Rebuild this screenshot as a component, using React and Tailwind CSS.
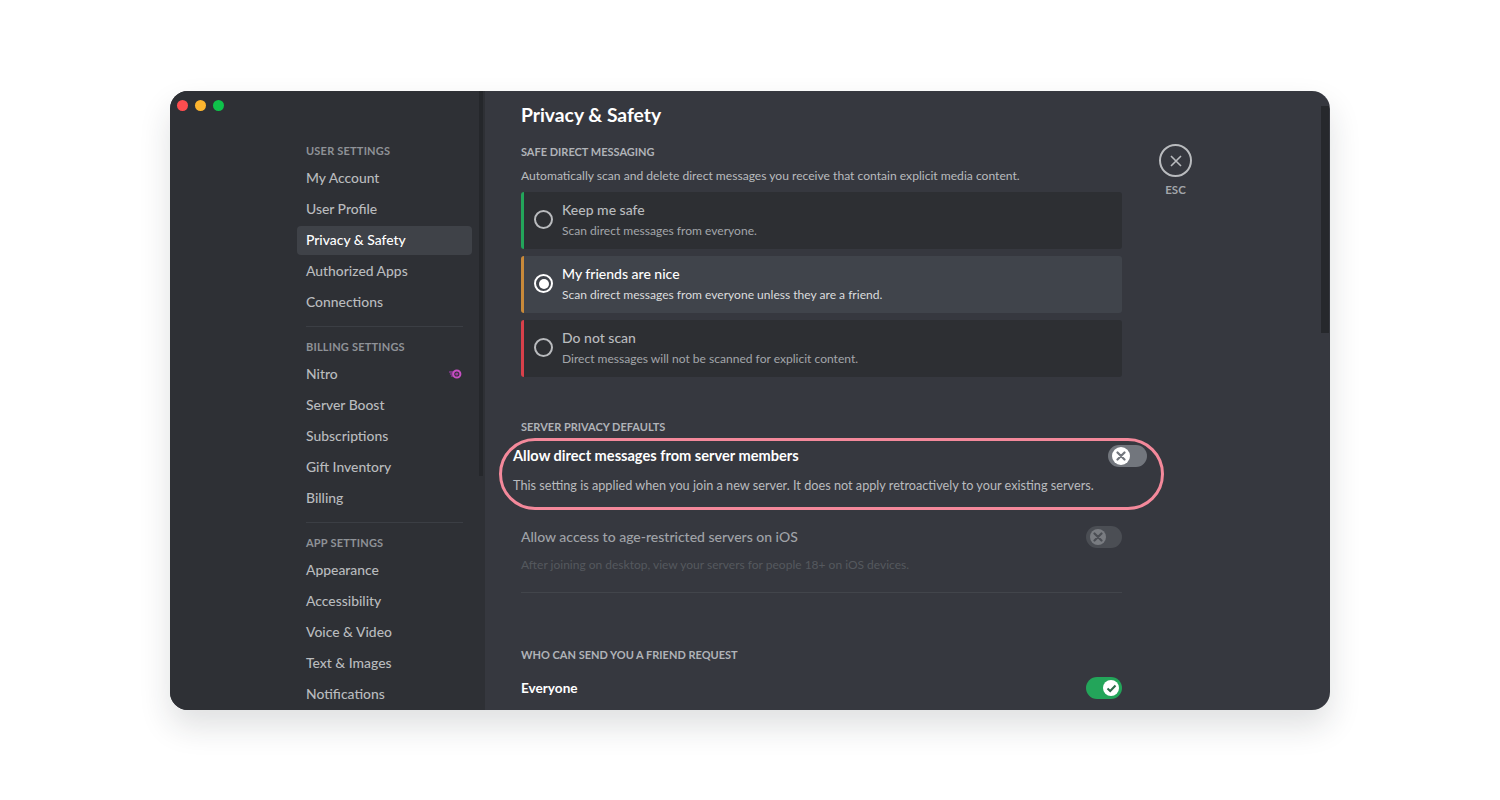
const Item = ({ children, active, badge }) => (
  <div className={`flex items-center justify-between h-[29px] mb-[2px] pl-[9px] pr-[9px] pb-[1px] rounded-[4px] text-[13.9px] font-medium leading-none ${active ? 'bg-[#3f4248] text-white' : 'text-[#b9bbbe]'}`}>
    <span>{children}</span>
    {badge}
  </div>
);

const Head = ({ children }) => (
  <div className="flex items-center h-[20px] mb-[3px] pl-[9px] text-[11px] font-bold uppercase tracking-[0.2px] text-[#8e9297]">{children}</div>
);

const Divider = () => <div className="h-px bg-[#3b3e44] mt-[9px] mb-[10px] mx-[9px]" />;

const Nitro = () => (
  <svg width="13" height="12" viewBox="0 0 13 12" className="mr-[1px]">
    <path d="M0.5 4 H5 M1.5 6 H4.5 M2.5 8 H5" stroke="#8a3a96" strokeWidth="1.4" strokeLinecap="round" />
    <circle cx="7.8" cy="6" r="3.6" fill="none" stroke="#c84fc4" strokeWidth="2" />
    <circle cx="7.8" cy="6" r="1.6" fill="#a03aa0" />
  </svg>
);

const Radio = ({ on }) => (
  <div className={`w-[19px] h-[19px] rounded-full border-2 flex items-center justify-center shrink-0 ${on ? 'border-white' : 'border-[#b9bbbe]'}`}>
    {on && <div className="w-[10px] h-[10px] rounded-full bg-white" />}
  </div>
);

const Card = ({ color, title, desc, on }) => (
  <div className={`flex items-center h-[57px] border-l-[3px] rounded-[3px] pl-[10px] pr-[10px] pb-[2px] gap-[9px] ${color} ${on ? 'bg-[#40444b]' : 'bg-[#2d2f33]'}`}>
    <Radio on={on} />
    <div>
      <div className={`text-[14px] font-medium leading-[20px] ${on ? 'text-white' : 'text-[#b9bbbe]'}`}>{title}</div>
      <div className={`text-[12.05px] leading-[16px] mt-[3px] ${on ? 'text-[#dcddde]' : 'text-[#a3a6aa]'}`}>{desc}</div>
    </div>
  </div>
);

const XGlyph = ({ stroke }) => (
  <svg width="10" height="10" viewBox="0 0 10 10"><path d="M1.5 1.5 L8.5 8.5 M8.5 1.5 L1.5 8.5" stroke={stroke} strokeWidth="2.2" strokeLinecap="round" /></svg>
);

const ToggleOff = () => (
  <div className="w-[39px] h-[22px] rounded-full bg-[#72767d] p-[3px] pl-[4px] flex items-center shrink-0">
    <div className="w-[18px] h-[18px] rounded-full bg-white flex items-center justify-center"><XGlyph stroke="#72767d" /></div>
  </div>
);

const ToggleOffDim = () => (
  <div className="w-[36px] h-[22px] rounded-full bg-[#4b4e54] p-[3px] pl-[4px] flex items-center shrink-0">
    <div className="w-[16px] h-[16px] rounded-full bg-[#797c81] flex items-center justify-center"><XGlyph stroke="#4b4e54" /></div>
  </div>
);

const ToggleOn = () => (
  <div className="w-[36px] h-[22px] rounded-full bg-[#23a55a] p-[3px] flex items-center justify-end shrink-0">
    <div className="w-[16px] h-[16px] rounded-full bg-white flex items-center justify-center">
      <svg width="11" height="9" viewBox="0 0 11 9"><path d="M1.5 4.5 L4.2 7 L9.5 1.5" fill="none" stroke="#2d6b4a" strokeWidth="2" /></svg>
    </div>
  </div>
);

const SecHead = ({ children, className = '' }) => (
  <div className={`text-[11px] font-bold uppercase leading-[16px] text-[#b0b3b8] ${className}`}>{children}</div>
);

export default function App() {
  return (
    <div className="w-[1500px] h-[800px] bg-white pt-[91px] pl-[170px] overflow-hidden" style={{ fontFamily: 'Lato, "Noto Sans", sans-serif' }}>
      <div className="relative w-[1160px] h-[619px] rounded-[18px] overflow-hidden flex bg-[#36383f] shadow-[0_16px_32px_rgba(30,32,40,0.14)]">
        <div className="absolute z-10 left-[7px] top-[9px] flex gap-[7px]">
          <div className="w-[11px] h-[11px] rounded-full bg-[#ff4d4f]" />
          <div className="w-[11px] h-[11px] rounded-full bg-[#fdb52f]" />
          <div className="w-[11px] h-[11px] rounded-full bg-[#0ec24a]" />
        </div>

        <div className="relative w-[315px] shrink-0 bg-[#2e3035] pt-[50px] pl-[127px] pr-[13px]">
          <Head>User Settings</Head>
          <Item>My Account</Item>
          <Item>User Profile</Item>
          <Item active>Privacy &amp; Safety</Item>
          <Item>Authorized Apps</Item>
          <Item>Connections</Item>
          <Divider />
          <Head>Billing Settings</Head>
          <Item badge={<Nitro />}>Nitro</Item>
          <Item>Server Boost</Item>
          <Item>Subscriptions</Item>
          <Item>Gift Inventory</Item>
          <Item>Billing</Item>
          <Divider />
          <Head>App Settings</Head>
          <Item>Appearance</Item>
          <Item>Accessibility</Item>
          <Item>Voice &amp; Video</Item>
          <Item>Text &amp; Images</Item>
          <Item>Notifications</Item>
          <div className="absolute top-0 left-[309px] w-[4px] h-[385px] bg-[#25272b]" />
        </div>

        <div className="flex-1 flex pl-[36px] min-w-0">
          <div className="w-[601px] shrink-0 pt-[11px]">
            <div className="text-[19.3px] font-bold leading-[26px] text-white">Privacy &amp; Safety</div>
            <SecHead className="mt-[16px]">Safe Direct Messaging</SecHead>
            <div className="text-[12.1px] leading-[16px] mt-[8px] text-[#b9bbbe]">Automatically scan and delete direct messages you receive that contain explicit media content.</div>
            <div className="flex flex-col gap-[7px] mt-[8px]">
              <Card color="border-[#23a55a]" title="Keep me safe" desc="Scan direct messages from everyone." />
              <Card on color="border-[#c98a3a]" title="My friends are nice" desc="Scan direct messages from everyone unless they are a friend." />
              <Card color="border-[#d8404a]" title="Do not scan" desc="Direct messages will not be scanned for explicit content." />
            </div>

            <SecHead className="mt-[42px]">Server Privacy Defaults</SecHead>

            <div className="ml-[-22px] mr-[-42px] mt-[3px] h-[72px] rounded-[36px] border-[3px] border-[#f4899b] px-[11px] pt-[4px]">
              <div className="flex items-center justify-between pr-[3px]">
                <div className="text-[14.6px] font-bold leading-[20px] text-white">Allow direct messages from server members</div>
                <ToggleOff />
              </div>
              <div className="text-[12.7px] leading-[16px] mt-[10px] text-[#b9bbbe]">This setting is applied when you join a new server. It does not apply retroactively to your existing servers.</div>
            </div>

            <div className="flex items-center justify-between mt-[16px]">
              <div className="text-[14px] font-medium leading-[22px] text-[#a0a3a8]">Allow access to age-restricted servers on iOS</div>
              <ToggleOffDim />
            </div>
            <div className="text-[12px] leading-[16px] mt-[9px] text-[#55585e]">After joining on desktop, view your servers for people 18+ on iOS devices.</div>
            <div className="h-px bg-[#42454b] mt-[19px]" />

            <SecHead className="mt-[54px]">Who can send you a friend request</SecHead>
            <div className="flex items-center justify-between mt-[14px]">
              <div className="text-[13.6px] font-bold leading-[22px] text-white">Everyone</div>
              <ToggleOn />
            </div>
          </div>

          <div className="ml-[37px] pt-[53px] w-[33px] flex flex-col items-center shrink-0">
            <div className="w-[33px] h-[33px] rounded-full border-2 border-[#b9bbbe] flex items-center justify-center">
              <svg width="14" height="14" viewBox="0 0 14 14"><path d="M2 2 L12 12 M12 2 L2 12" stroke="#b9bbbe" strokeWidth="1.6" /></svg>
            </div>
            <div className="text-[11.5px] font-bold leading-[14px] mt-[6px] text-[#a3a6aa]">ESC</div>
          </div>

          <div className="flex-1" />
          <div className="w-[8px] shrink-0 mr-[1px] mt-[15px] h-[227px] bg-[#26282c]" />
        </div>
      </div>
    </div>
  );
}
